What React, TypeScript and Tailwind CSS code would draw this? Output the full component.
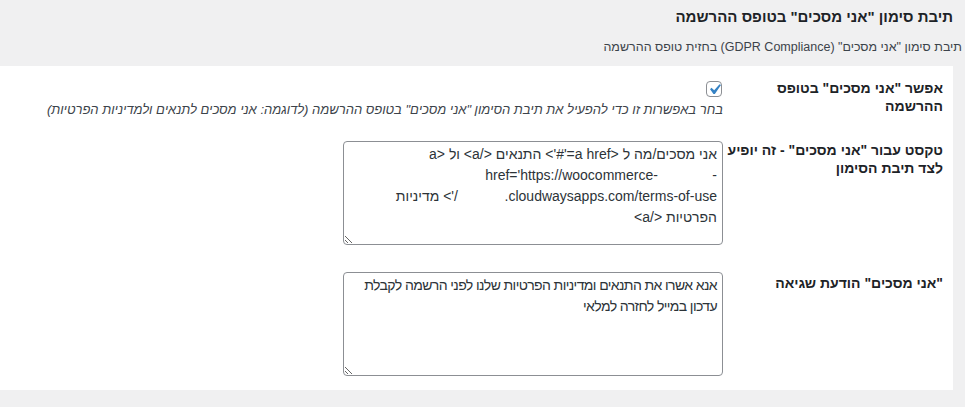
import React from "react";

// redacted parts of the site URL show up as blank space in the screenshot
const blank = (n: number) => "\u00a0".repeat(n);

const CONSENT_TEXT =
  "אני מסכים/מה ל <a href='#'> התנאים </a> ול <a href='https://woocommerce-" +
  blank(14) +
  "-" +
  blank(12) +
  ".cloudwaysapps.com/terms-of-use/'> מדיניות הפרטיות </a>";

const ERROR_TEXT =
  "אנא אשרו את התנאים ומדיניות הפרטיות שלנו לפני הרשמה לקבלת עדכון במייל לחזרה למלאי";

function Checkbox({ checked }: { checked: boolean }) {
  return (
    <span className="relative block w-[16px] h-[16px] rounded-[4px] border border-[#8c8f94] bg-white">
      {checked && (
        <svg
          viewBox="0 0 20 20"
          className="absolute -top-[3px] -right-[4px] w-[21px] h-[21px]"
        >
          <path
            d="M14.83 4.89l1.34.94-5.81 8.38H9.02L5.78 9.67l1.34-1.25 2.57 2.4z"
            fill="#3582c4"
          />
        </svg>
      )}
    </span>
  );
}

function Label({ children, className }: { children: React.ReactNode; className: string }) {
  return (
    <div
      className={
        "w-[220px] shrink-0 text-[14px] leading-[18px] font-bold text-[#1d2327] " + className
      }
    >
      {children}
    </div>
  );
}

function TextBox({ value, className = "" }: { value: string; className?: string }) {
  return (
    <textarea
      dir="rtl"
      readOnly
      defaultValue={value}
      className={
        "block w-[380px] h-[104px] rounded-[4px] border border-[#8c8f94] bg-white px-[5px] py-[2px] text-[14px] leading-[21px] text-[#2c3338] font-['Liberation_Sans',sans-serif] outline-none " +
        className
      }
    />
  );
}

export default function App() {
  return (
    <div
      dir="rtl"
      className="w-[965px] h-[407px] overflow-hidden bg-[#f0f0f1] font-['Liberation_Sans',sans-serif] text-[#1d2327]"
    >
      <h2 className="pr-[12px] pt-[7px] h-[30px] text-[15px] leading-[20px] font-bold">
        תיבת סימון "אני מסכים" בטופס ההרשמה
      </h2>
      <p className="pr-[3px] h-[36px] pt-[8px] text-[12.5px] leading-[18px] text-[#3c434a]">
        תיבת סימון "אני מסכים" (GDPR Compliance) בחזית טופס ההרשמה
      </p>

      <div className="mr-[12px] bg-white pr-[10px] h-[324px]">
        <div className="flex">
          <Label className="pt-[13px]">
            אפשר "אני מסכים" בטופס
            <br />
            ההרשמה
          </Label>
          <div className="flex-1 pt-[15px] pb-[6px]">
            <div className="pr-[1px]">
              <Checkbox checked />
            </div>
            <p className="mt-[4px] text-[13px] leading-[18px] italic text-[#3c434a]">
              בחר באפשרות זו כדי להפעיל את תיבת הסימון "אני מסכים" בטופס ההרשמה (לדוגמה: אני מסכים לתנאים ולמדיניות הפרטיות)
            </p>
          </div>
        </div>

        <div className="flex">
          <Label className="pt-[16px]">טקסט עבור "אני מסכים" - זה יופיע לצד תיבת הסימון</Label>
          <div className="flex-1 pt-[16px] pb-[12px]">
            <TextBox value={CONSENT_TEXT} />
          </div>
        </div>

        <div className="flex">
          <Label className="pt-[17px]">"אני מסכים" הודעת שגיאה</Label>
          <div className="flex-1 pt-[15px]">
            <TextBox value={ERROR_TEXT} className="tracking-[-0.6px]" />
          </div>
        </div>
      </div>
    </div>
  );
}
